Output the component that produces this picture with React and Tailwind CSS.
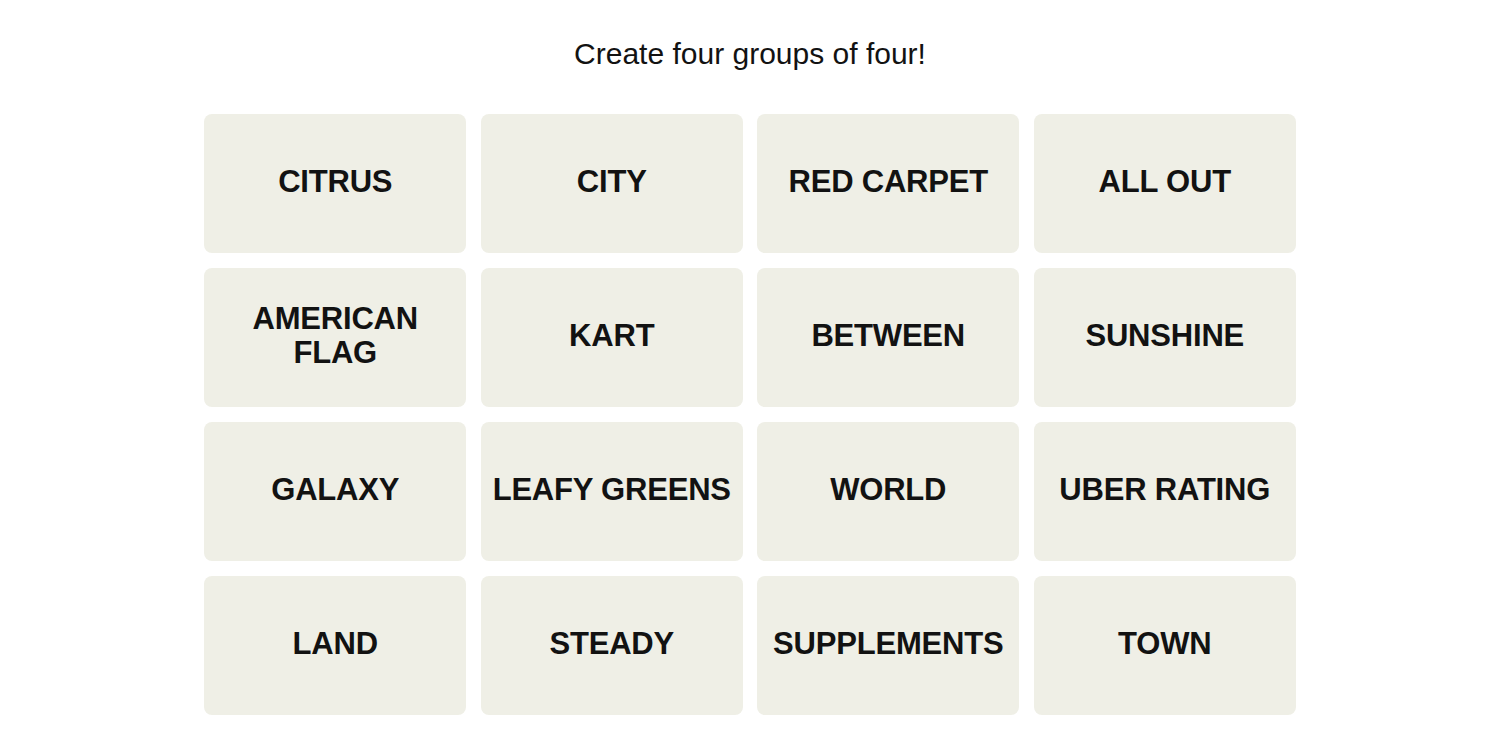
import React from "react";

const WORDS = [
  "CITRUS", "CITY", "RED CARPET", "ALL OUT",
  "AMERICAN\nFLAG", "KART", "BETWEEN", "SUNSHINE",
  "GALAXY", "LEAFY GREENS", "WORLD", "UBER RATING",
  "LAND", "STEADY", "SUPPLEMENTS", "TOWN",
];

export default function App() {
  return (
    <div className="min-h-screen bg-white flex flex-col items-center font-['Liberation_Sans',Arial,sans-serif] text-[#121212]">
      <p className="mt-[35px] text-[30px] leading-[38px]">Create four groups of four!</p>
      <div className="mt-[41px] grid grid-cols-[repeat(4,262px)] auto-rows-[139px] gap-x-[14.5px] gap-y-[15px]">
        {WORDS.map((w) => (
          <div
            key={w}
            className="bg-[#efefe6] rounded-lg flex items-center justify-center text-center pb-[4px]"
          >
            <span className="font-bold text-[31px] leading-[34px] whitespace-pre tracking-[-0.2px]">
              {w}
            </span>
          </div>
        ))}
      </div>
    </div>
  );
}
